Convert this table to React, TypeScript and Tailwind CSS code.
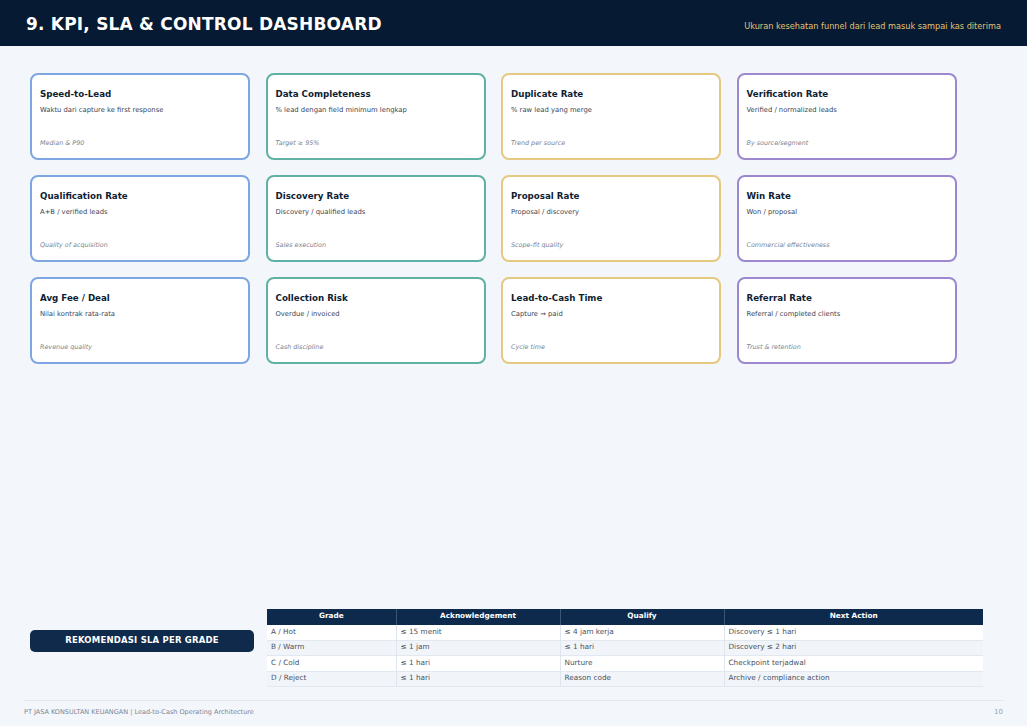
import React from "react";

type Card = { title: string; desc: string; note: string; color: string };

const cards: Card[] = [
  { title: "Speed-to-Lead", desc: "Waktu dari capture ke first response", note: "Median & P90", color: "border-[#7ea6e2]" },
  { title: "Data Completeness", desc: "% lead dengan field minimum lengkap", note: "Target ≥ 95%", color: "border-[#5fb1a4]" },
  { title: "Duplicate Rate", desc: "% raw lead yang merge", note: "Trend per source", color: "border-[#e6c981]" },
  { title: "Verification Rate", desc: "Verified / normalized leads", note: "By source/segment", color: "border-[#9d88d0]" },
  { title: "Qualification Rate", desc: "A+B / verified leads", note: "Quality of acquisition", color: "border-[#7ea6e2]" },
  { title: "Discovery Rate", desc: "Discovery / qualified leads", note: "Sales execution", color: "border-[#5fb1a4]" },
  { title: "Proposal Rate", desc: "Proposal / discovery", note: "Scope-fit quality", color: "border-[#e6c981]" },
  { title: "Win Rate", desc: "Won / proposal", note: "Commercial effectiveness", color: "border-[#9d88d0]" },
  { title: "Avg Fee / Deal", desc: "Nilai kontrak rata-rata", note: "Revenue quality", color: "border-[#7ea6e2]" },
  { title: "Collection Risk", desc: "Overdue / invoiced", note: "Cash discipline", color: "border-[#5fb1a4]" },
  { title: "Lead-to-Cash Time", desc: "Capture → paid", note: "Cycle time", color: "border-[#e6c981]" },
  { title: "Referral Rate", desc: "Referral / completed clients", note: "Trust & retention", color: "border-[#9d88d0]" },
];

const rows = [
  ["A / Hot", "≤ 15 menit", "≤ 4 jam kerja", "Discovery ≤ 1 hari"],
  ["B / Warm", "≤ 1 jam", "≤ 1 hari", "Discovery ≤ 2 hari"],
  ["C / Cold", "≤ 1 hari", "Nurture", "Checkpoint terjadwal"],
  ["D / Reject", "≤ 1 hari", "Reason code", "Archive / compliance action"],
];

export default function App() {
  return (
    <div
      className="w-[1027px] h-[726px] bg-[#f3f6fb] flex flex-col overflow-hidden"
      style={{ fontFamily: '"DejaVu Sans", Verdana, sans-serif' }}
    >
      <header className="h-[46px] bg-[#061a33] flex items-center justify-between pl-[26px] pr-[26px] shrink-0">
        <h1 className="text-white font-bold text-[17px] leading-none tracking-[0.2px] mt-[2px]">9. KPI, SLA &amp; CONTROL DASHBOARD</h1>
        <p className="text-[#e2c275] text-[8.2px] leading-none mt-[6px]">Ukuran kesehatan funnel dari lead masuk sampai kas diterima</p>
      </header>

      <main className="flex-1 flex flex-col px-[30px]">
        <div className="grid grid-cols-[220px_220px_220px_220px] gap-x-[15.5px] gap-y-[15px] mt-[27px]">
          {cards.map((c) => (
            <div
              key={c.title}
              className={`h-[87px] bg-white border-2 ${c.color} rounded-[8px] px-[8px] pt-[15px] flex flex-col`}
            >
              <div className="text-[#0f1e33] font-bold text-[8.7px] leading-none">{c.title}</div>
              <div className="text-[#3a4454] text-[6.8px] leading-none mt-[8px]">{c.desc}</div>
              <div className="text-[#7a8290] italic text-[6.4px] leading-none mt-auto mb-[12px]">{c.note}</div>
            </div>
          ))}
        </div>

        <div className="flex-1" />

        <div className="flex items-start gap-[13px] mb-[13px]">
          <div className="w-[224px] h-[22px] mt-[21px] bg-[#0f2a4a] rounded-[5px] flex items-center justify-center">
            <span className="text-white font-bold text-[8.5px] tracking-[0.2px]">REKOMENDASI SLA PER GRADE</span>
          </div>
          <table className="w-[716px] border-collapse text-[7.3px]">
            <thead>
              <tr className="bg-[#0d2a4d] text-white h-[16px]">
                <th className="w-[129px] font-bold border-r border-[#3b5575]">Grade</th>
                <th className="w-[164px] font-bold border-r border-[#3b5575]">Acknowledgement</th>
                <th className="w-[164px] font-bold border-r border-[#3b5575]">Qualify</th>
                <th className="font-bold">Next Action</th>
              </tr>
            </thead>
            <tbody>
              {rows.map((r, i) => (
                <tr key={i} className={`h-[15.5px] ${i % 2 === 0 ? "bg-white" : "bg-[#f1f5fa]"} text-[#4a5260] border-b border-[#e2e8f0]`}>
                  {r.map((cell, j) => (
                    <td key={j} className={`px-[4px] ${j < 3 ? "border-r border-[#dfe5ee]" : ""}`}>{cell}</td>
                  ))}
                </tr>
              ))}
            </tbody>
          </table>
        </div>
      </main>

      <footer className="mx-[24px] border-t border-[#e3e8ef] h-[26px] flex items-center justify-between shrink-0 pb-[2px]">
        <span className="text-[#7c8594] text-[6.5px]">PT JASA KONSULTAN KEUANGAN | Lead-to-Cash Operating Architecture</span>
        <span className="text-[#9aa1ac] text-[7px]">10</span>
      </footer>
    </div>
  );
}
